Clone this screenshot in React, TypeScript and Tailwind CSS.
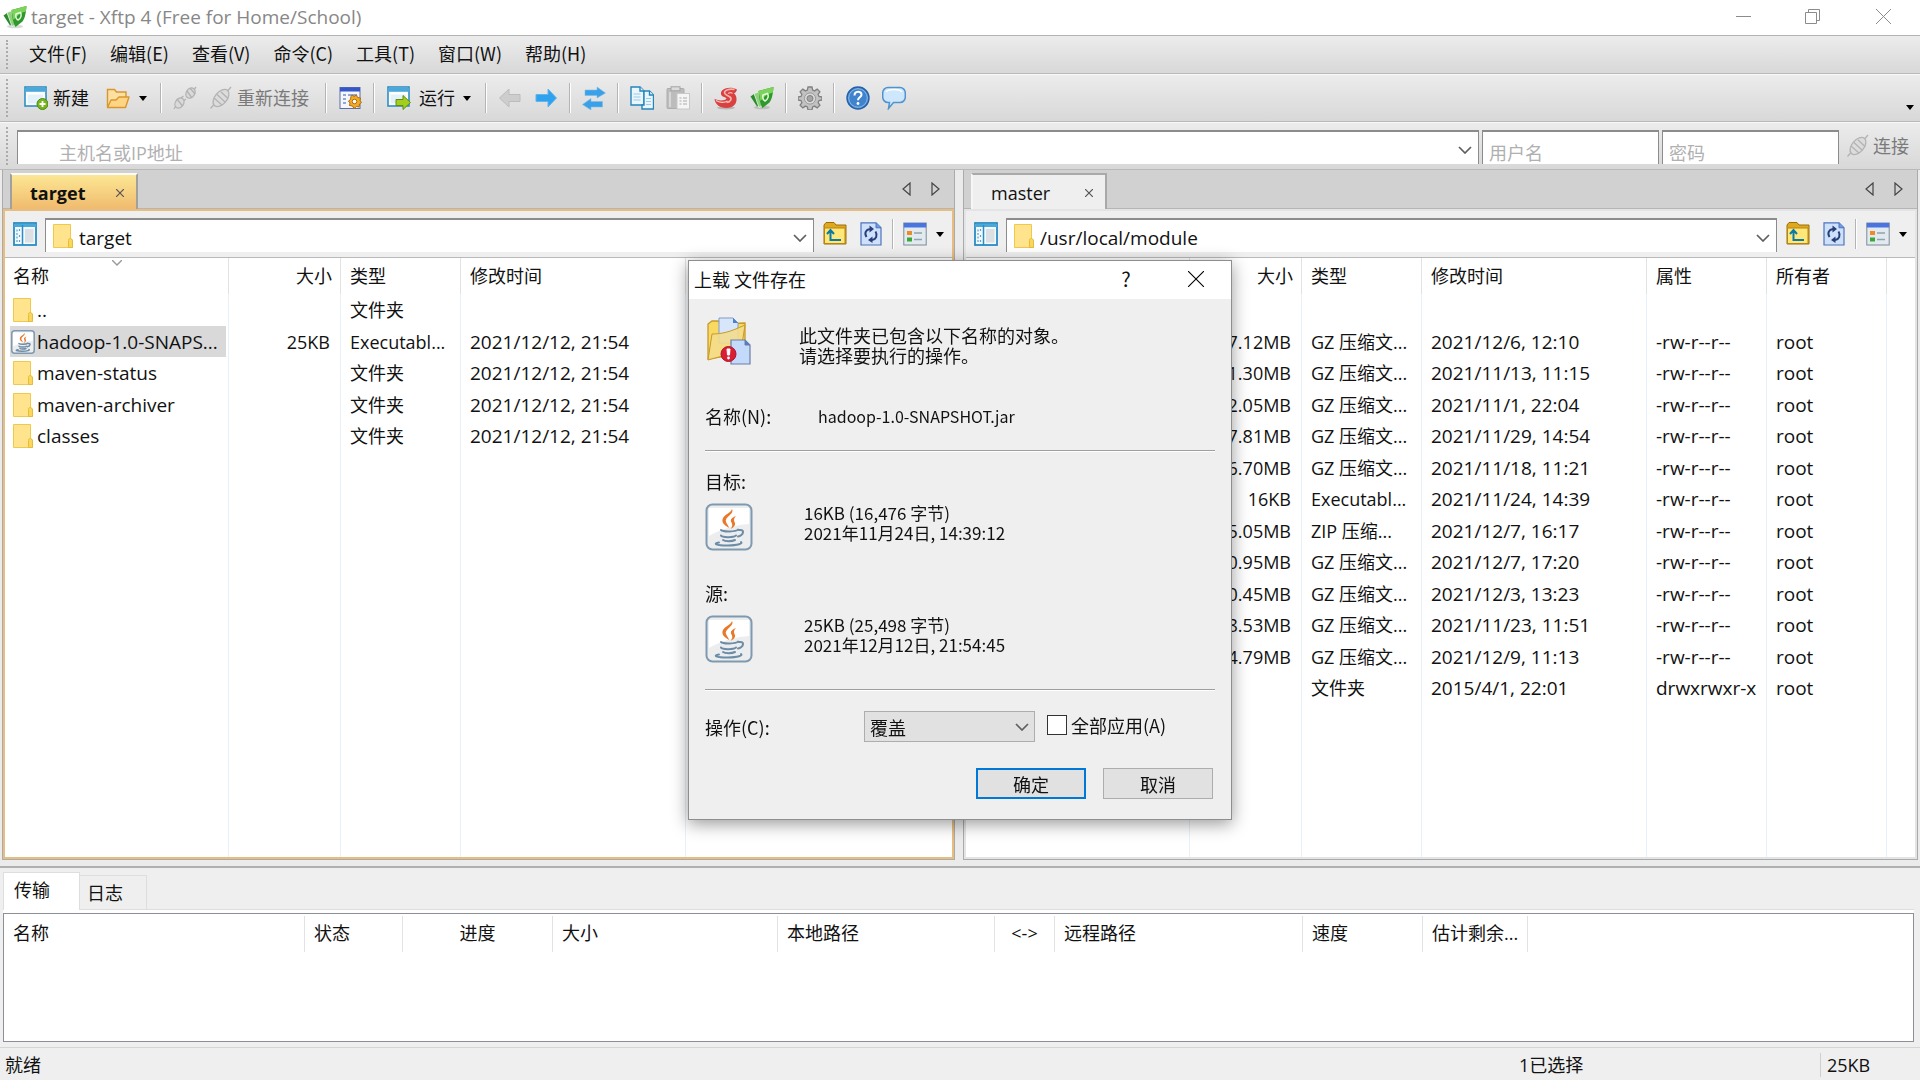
import type { ReactNode } from "react";

interface FileRow {
  name?: string;
  kind?: "folder" | "jar";
  size?: string;
  type?: string;
  modified?: string;
  attrs?: string;
  owner?: string;
  selected?: boolean;
}

interface Column {
  label: string;
  width: string;
  right?: boolean;
}

const LOCAL_COLUMNS: Column[] = [
  { label: "名称", width: "w-[224px]" },
  { label: "大小", width: "w-[112px]", right: true },
  { label: "类型", width: "w-[120px]" },
  { label: "修改时间", width: "w-[225px]" },
  { label: "", width: "" },
];

const REMOTE_COLUMNS: Column[] = [
  { label: "名称", width: "w-[224px]" },
  { label: "大小", width: "w-[112px]", right: true },
  { label: "类型", width: "w-[120px]" },
  { label: "修改时间", width: "w-[225px]" },
  { label: "属性", width: "w-[120px]" },
  { label: "所有者", width: "w-[120px]" },
  { label: "", width: "" },
];

const LOCAL_FILES: FileRow[] = [
  { name: "..", kind: "folder", type: "文件夹" },
  {
    name: "hadoop-1.0-SNAPS...",
    kind: "jar",
    size: "25KB",
    type: "Executabl...",
    modified: "2021/12/12, 21:54",
    selected: true,
  },
  { name: "maven-status", kind: "folder", type: "文件夹", modified: "2021/12/12, 21:54" },
  { name: "maven-archiver", kind: "folder", type: "文件夹", modified: "2021/12/12, 21:54" },
  { name: "classes", kind: "folder", type: "文件夹", modified: "2021/12/12, 21:54" },
];

const GZ = "GZ 压缩文...";
const RW = "-rw-r--r--";

const REMOTE_FILES: FileRow[] = [
  {},
  { size: "7.12MB", type: GZ, modified: "2021/12/6, 12:10", attrs: RW, owner: "root" },
  { size: "1.30MB", type: GZ, modified: "2021/11/13, 11:15", attrs: RW, owner: "root" },
  { size: "2.05MB", type: GZ, modified: "2021/11/1, 22:04", attrs: RW, owner: "root" },
  { size: "7.81MB", type: GZ, modified: "2021/11/29, 14:54", attrs: RW, owner: "root" },
  { size: "6.70MB", type: GZ, modified: "2021/11/18, 11:21", attrs: RW, owner: "root" },
  { size: "16KB", type: "Executabl...", modified: "2021/11/24, 14:39", attrs: RW, owner: "root" },
  { size: "5.05MB", type: "ZIP 压缩...", modified: "2021/12/7, 16:17", attrs: RW, owner: "root" },
  { size: "0.95MB", type: GZ, modified: "2021/12/7, 17:20", attrs: RW, owner: "root" },
  { size: "0.45MB", type: GZ, modified: "2021/12/3, 13:23", attrs: RW, owner: "root" },
  { size: "8.53MB", type: GZ, modified: "2021/11/23, 11:51", attrs: RW, owner: "root" },
  { size: "4.79MB", type: GZ, modified: "2021/12/9, 11:13", attrs: RW, owner: "root" },
  { type: "文件夹", modified: "2015/4/1, 22:01", attrs: "drwxrwxr-x", owner: "root" },
];

const TRANSFER_COLUMNS = [
  { label: "名称", width: "w-[301px]" },
  { label: "状态", width: "w-[98px]" },
  { label: "进度", width: "w-[150px]", center: true },
  { label: "大小", width: "w-[225px]" },
  { label: "本地路径", width: "w-[217px]" },
  { label: "<->", width: "w-[60px]", center: true },
  { label: "远程路径", width: "w-[248px]" },
  { label: "速度", width: "w-[120px]" },
  { label: "估计剩余...", width: "w-[105px]" },
];

const MENUS = ["文件(F)", "编辑(E)", "查看(V)", "命令(C)", "工具(T)", "窗口(W)", "帮助(H)"];

/* ---------- icons ---------- */

function Icon({ children }: { children: ReactNode }) {
  return (
    <svg viewBox="0 0 24 24" className="h-6 w-6 shrink-0" fill="none" aria-hidden="true">
      {children}
    </svg>
  );
}

function XftpIcon() {
  return (
    <Icon>
      <ellipse cx="12" cy="21.500" rx="8" ry="1.800" fill="#000" opacity=".15" />
      <path d="M.5 10.500 4 8l5 11.500-2 1Z" fill="#2c8a2e" />
      <path d="M4 7.500 8.500 6 12 20l-3 1.500Z" fill="#8fd07c" stroke="#eefaea" strokeWidth=".7" />
      <path d="M8.500 5 23.500 1c-.6 6-1 11.500-4 15.500L12.500 22c-2.500-4-3.500-11-4-17Z" fill="#2f9a2b" />
      <path d="M8.500 5 23.500 1l-.6 5.500C18 7.500 14 10.500 10.500 15Z" fill="#7bd35a" />
      <path d="m13 9 4.500-1.500c1.500 2.500.5 6-2.500 7.500-2-1-2.500-3.500-2-6Z" stroke="#e4fadc" strokeWidth="1.500" />
    </Icon>
  );
}

function XshellIcon() {
  return (
    <Icon>
      <ellipse cx="12" cy="21.800" rx="9" ry="1.600" fill="#000" opacity=".18" />
      <path
        d="M23 3.500C18 .5 10.500 1.500 8 4.500c-2 2.700-1 5.500 2 6.500s3 2 1 2.700c-3 1.300-7 .8-10.500-.7C1 18 5.500 22 12.500 22 19 22 23 18 22.500 12.500 22.300 10 21.500 8.500 20 7.500c1.500-.7 2.600-2 3-4Z"
        fill="#d94141"
      />
      <path d="M20.500 3.500C15.500 2.500 10.500 4 10.500 6.500s3.500 3 5.500 4.500 1 5-3.500 5.500" stroke="#f7b3ae" strokeWidth="1.600" />
      <path d="M14 7.500c1.500-1 3.500-1 4.500 0" stroke="#f7b3ae" strokeWidth="1.200" />
      <path d="M2 14.500c3.500 2.300 8.500 2.300 11.500.5" stroke="#f9cbc7" strokeWidth="1.200" />
    </Icon>
  );
}

function NewSessionIcon() {
  return (
    <Icon>
      <rect x="1" y="1" width="21" height="19" fill="#fff" stroke="#2f8fc4" strokeWidth="1.600" />
      <rect x="1.800" y="1.800" width="19.400" height="4" fill="#4aa8da" />
      <path d="M3.500 8.500H19v9H3.500Z" fill="#e3f2fa" />
      <circle cx="18.500" cy="18" r="5.500" fill="#78b41e" stroke="#4e8a10" />
      <path d="M18.500 15v6M15.500 18h6" stroke="#fff" strokeWidth="1.800" />
    </Icon>
  );
}

function RunIcon() {
  return (
    <Icon>
      <rect x="1" y="1" width="21" height="19" fill="#fff" stroke="#2f8fc4" strokeWidth="1.600" />
      <rect x="1.800" y="1.800" width="19.400" height="4" fill="#4aa8da" />
      <path d="M3.500 8.500H19v9H3.500Z" fill="#e3f2fa" />
      <path d="M9 13.500h7V9.500l7.500 7-7.500 7v-4H9Z" fill="#a4ce1e" stroke="#5f8f0c" />
    </Icon>
  );
}

function OpenFolderIcon() {
  return (
    <Icon>
      <path d="M1.500 21V3.500h7l2 2.500H20v5" fill="#fbe0a2" stroke="#d9962c" strokeWidth="1.400" />
      <path d="M1.500 21.500 5 14h5l3-3h10l-3.500 10.500Z" fill="#fdd585" stroke="#d9962c" strokeWidth="1.400" strokeLinejoin="round" />
    </Icon>
  );
}

function DisconnectIcon() {
  return (
    <Icon>
      <g stroke="#b3b3b3" strokeWidth="1.300" fill="#dadada">
        <path d="m1 23 2-3" />
        <ellipse cx="6.500" cy="17" rx="4" ry="5.500" transform="rotate(35 6.500 17)" />
        <path d="m4 13 5.500 7M10.500 15l2.500-2M8 12l2.500-2" />
        <ellipse cx="17.500" cy="7" rx="4.200" ry="5.500" transform="rotate(35 17.500 7)" />
        <path d="m14 5 5 7M17 2l5 6M21.500 3 23 1" />
      </g>
    </Icon>
  );
}

function PlugIcon() {
  return (
    <Icon>
      <g stroke="#b3b3b3" strokeWidth="1.300" fill="#dcdcdc">
        <path d="m1.500 22.500 3.500-4M18.500 5l3.500-4" />
        <ellipse cx="12" cy="12" rx="6" ry="10" transform="rotate(40 12 12)" />
        <path d="m5 12 8 7M8 8.500l8 7.500M12 6l7 6.500" />
      </g>
    </Icon>
  );
}

function PropertiesIcon() {
  return (
    <Icon>
      <rect x="2" y="1.500" width="20" height="21" fill="#f4f6fb" stroke="#5a6fa8" />
      <rect x="2" y="1.500" width="20" height="4" fill="#3456c8" />
      <path d="M5 9h3M5 13h3M5 17h3M10 9h9" stroke="#6f8fc8" strokeWidth="1.500" />
      <path
        d="m14 9 2 1.500L18.500 9l1 2.500 3 .5-.5 2.500 1.500 2-2 1.500-.5 3-2.500-.5-2.500 2-1.500-2.500-3-.5.5-2.500-1.500-2 2-1.500.5-3Z"
        fill="#f3ab26"
        stroke="#b26a08"
      />
      <circle cx="16.500" cy="15.500" r="2.300" fill="#fff" stroke="#b26a08" />
    </Icon>
  );
}

function ArrowIcon({ back }: { back?: boolean }) {
  return back ? (
    <Icon>
      <path d="M1.500 12 11 3v5.500h11v7H11V21Z" fill="#cdcdcd" stroke="#bcbcbc" strokeLinejoin="round" />
    </Icon>
  ) : (
    <Icon>
      <path d="M22.500 12 14 3v5.500H2v7h12V21Z" fill="#2ea2ee" stroke="#68b4e6" strokeLinejoin="round" />
    </Icon>
  );
}

function SwapIcon() {
  return (
    <Icon>
      <path d="M3 4h12V1l8.500 6-8.500 5V9.500H3Z" fill="#3aa0e8" stroke="#7cbce8" strokeWidth=".6" />
      <path d="M20.500 15.500H9v-3L.5 18.500 9 24v-3h11.500Z" fill="#3aa0e8" stroke="#7cbce8" strokeWidth=".6" />
    </Icon>
  );
}

function CopyIcon() {
  return (
    <Icon>
      <g stroke="#2585b8" strokeWidth="1.400" fill="#e9f6fd">
        <path d="M1 1h9l4 4v14H1Z" />
        <path d="M10 1v4h4" />
        <path d="M14 5h5.500L23.500 9v14H12v-4h2Z" />
        <path d="M19.500 5v4h4" />
      </g>
      <path d="M3.500 8h7M3.500 11h7M3.500 14h7M16 12.500h5M16 15.500h5M16 18.500h5" stroke="#9dcbe4" />
    </Icon>
  );
}

function PasteIcon() {
  return (
    <Icon>
      <rect x="1" y="2.500" width="17" height="20" rx="1" fill="#bcbcbc" stroke="#adadad" />
      <rect x="5" y=".8" width="9" height="4" fill="#dcdcdc" stroke="#a3a3a3" />
      <path d="M4 6v15" stroke="#e0e0e0" strokeWidth="1.500" />
      <rect x="11" y="7.500" width="12.500" height="15.500" fill="#f5f5f5" stroke="#c8c8c8" />
      <path d="M13.500 12h2m1.500 0h4M13.500 15h2m1.500 0h4M13.500 18h2m1.500 0h4" stroke="#ababab" strokeWidth="1.200" />
    </Icon>
  );
}

function GearIcon() {
  return (
    <Icon>
      <path
        d="M10 1h4l.6 3 2 .9 2.600-1.800 2.700 2.700L20.100 8.400l.9 2 3 .6v3l-3 .6-.9 2 1.800 2.600-2.700 2.700-2.600-1.800-2 .9-.6 3h-4l-.6-3-2-.9-2.600 1.800-2.700-2.700 1.800-2.600-.9-2L0 14v-3l3-.6.900-2L2.100 5.800l2.700-2.700L7.400 4.900l2-.9Z"
        fill="#c2c2c2"
        stroke="#808080"
        strokeWidth="1.300"
      />
      <circle cx="12" cy="12.500" r="5.600" fill="#d9d9d9" stroke="#9a9a9a" />
      <circle cx="12" cy="12.500" r="3" fill="#a5a5a5" stroke="#808080" />
    </Icon>
  );
}

function HelpIcon() {
  return (
    <Icon>
      <circle cx="12" cy="12" r="11" fill="#3f83cc" stroke="#2561a8" strokeWidth="1.400" />
      <circle cx="12" cy="12" r="9.300" stroke="#8fbdec" />
      <path d="M8.500 9.500c0-5 7-5 7-.8 0 2.500-3.500 2.800-3.500 5.500" stroke="#fff" strokeWidth="2" />
      <circle cx="12" cy="17.500" r="1.400" fill="#fff" />
    </Icon>
  );
}

function ChatIcon() {
  return (
    <Icon>
      <path
        d="M6 1.500h12c3 0 5.300 2.500 5.300 5.500v4c0 3-2.300 5.500-5.300 5.500h-6.500L6.500 22.500l1-6H6C3 16.500.7 14 .7 11V7C.7 4 3 1.500 6 1.500Z"
        fill="#cfe7fd"
        stroke="#4f93cf"
        strokeWidth="1.500"
      />
      <path d="M4 6c1-2 3-2.500 8-2.500s7 .5 8 2.500" stroke="#fff" strokeWidth="1.500" />
    </Icon>
  );
}

function FolderIcon() {
  return (
    <Icon>
      <path d="M2.500.5h17v14l2 1.500v7.500h-19Z" fill="#ffe48d" stroke="#efc94c" />
      <path d="M19.500 14.500c-2 0-2 1-2 2v7h4V16Z" fill="#fbd65f" stroke="#e6bc3c" />
    </Icon>
  );
}

function JavaIcon({ large }: { large?: boolean }) {
  return (
    <svg viewBox="0 0 48 48" className={large ? "h-12 w-12 shrink-0" : "h-6 w-6 shrink-0"} fill="none" aria-hidden="true">
      <rect x="1.500" y="1.500" width="45" height="45" rx="6" fill="#ecedef" stroke="#7f9ab0" strokeWidth={large ? 2 : 3} />
      <path d="M4 5h40v16C30 22 16 26 4 33Z" fill="#fff" />
      <path d="M27 6c3 5-8 8-6 13 .8 2 2.500 3.500 3 6-5-3-8-6-6-10 2-4 8-5 9-9Z" fill="#e8792a" />
      <path d="M31 13c-5 2-6 4-4.500 6.500S27 24 25.500 26c4-2 5.500-4.500 4-7-1-2-.5-4 1.500-6Z" fill="#e8792a" />
      <g stroke="#6d8ca5" strokeWidth={large ? 2 : 3} strokeLinecap="round">
        <path d="M16 27c2 2 15 2 17-.5" />
        <path d="M16 32.500c1 2 12 2.500 15 0" />
        <path d="M18 37c2 1.500 9 1.500 12 0" />
        <path d="M34 27c6-1 5 5-1 6.500" />
        <path d="M14 39.500c-6 1-4 3 9 3 10 0 15-2 13-3.500" />
      </g>
    </svg>
  );
}

function PanelIcon() {
  return (
    <Icon>
      <rect x="1" y="1" width="22" height="22" fill="#f3f9fd" stroke="#2a8cc2" strokeWidth="1.800" />
      <path d="M1 3.500h22" stroke="#4aa8da" strokeWidth="3" />
      <path d="M9.500 3v20" stroke="#2a8cc2" strokeWidth="1.500" />
      <path d="M4 7.500v13M6.500 7v3m0 3v2m0 3v2" stroke="#5aa5cc" strokeWidth="1.200" strokeDasharray="2 1.500" />
      <path d="M12 7h8.500v13.500H12Z" fill="#dcdfe4" />
    </Icon>
  );
}

function FolderUpIcon() {
  return (
    <Icon>
      <path d="M1 22V3l2-2.500h8L13 3h10v19Z" fill="#e0a821" stroke="#9b7009" />
      <path d="M1.500 6H22v15.500H1.500Z" fill="#ffe77a" stroke="#b8860e" />
      <path d="M7.500 8v10H18M4 12l3.500-4 3.500 4" stroke="#0b7aa6" strokeWidth="2" />
    </Icon>
  );
}

function RefreshIcon() {
  return (
    <Icon>
      <path d="M2 .8h15l5 5V23H2Z" fill="#cfe0fa" stroke="#4d74bd" strokeWidth="1.200" />
      <path d="M17 .8v5h5" fill="#6f9be6" stroke="#4d74bd" />
      <path d="M7.500 15c-2.500-4-.5-7.500 3.500-8M16.500 9.500c2.500 4 .5 8-3.500 8.500" stroke="#27407a" strokeWidth="2" />
      <path d="M10.500 3.500 15 7l-4.500 3.500ZM13.500 14.500 9 18l4.500 3Z" fill="#27407a" />
    </Icon>
  );
}

function ViewIcon() {
  return (
    <Icon>
      <rect x=".8" y="1" width="22.400" height="22" fill="#e3eaef" stroke="#7d8b98" />
      <rect x=".8" y="1" width="22.400" height="4.500" fill="#4a75e0" />
      <rect x="4" y="9" width="5" height="4" fill="#f08a24" />
      <rect x="4" y="15.500" width="5" height="4" fill="#38a838" />
      <path d="M11 11h8M11 17.500h8" stroke="#8fa3b0" strokeWidth="1.500" />
    </Icon>
  );
}

function ConflictIcon() {
  return (
    <svg viewBox="0 0 44 48" className="h-12 w-11 shrink-0" fill="none" aria-hidden="true">
      <path d="M1 42V7l4-3h6l3 3 24-1v30Z" fill="#f7d964" stroke="#c79a28" strokeWidth="1.300" />
      <path d="M12 1h14l5 5v20H12Z" fill="#d7e6fb" stroke="#7e9cc9" />
      <path d="M26 1v5h5" fill="#4d7fd0" />
      <path d="M1 43 5 17c10 0 18-2 33-9l-4 26Z" fill="#f5dc8c" fillOpacity=".88" stroke="#c79a28" />
      <path d="M24 23h14l5 5v19H24Z" fill="#c3dafa" stroke="#6d7fa6" strokeWidth="1.200" />
      <path d="M38 23v5h5" fill="#4d7fd0" stroke="#6d7fa6" />
      <circle cx="21.500" cy="37" r="7.500" fill="#d81f35" stroke="#b01228" />
      <path d="M20 32h3l-.5 6h-2Z" fill="#fff" stroke="#fff" />
      <circle cx="21.500" cy="41" r="1.400" fill="#fff" />
    </svg>
  );
}

function Chevron() {
  return (
    <svg viewBox="0 0 14 8" className="h-2 w-3.5" fill="none" stroke="#5f5f5f" strokeWidth="1.700" aria-hidden="true">
      <path d="m1 1 6 6 6-6" />
    </svg>
  );
}

function Caret() {
  return (
    <svg viewBox="0 0 8 5" className="h-[5px] w-2 shrink-0" aria-hidden="true">
      <path d="M0 0h8L4 5Z" fill="#000" />
    </svg>
  );
}

/* ---------- bars ---------- */

function Grip() {
  return <span className="my-1 w-0 shrink-0 self-stretch border-l-2 border-dotted border-[#ababab]" />;
}

function Separator() {
  return (
    <span className="flex w-3 shrink-0 justify-center">
      <span className="h-[30px] w-0.5 border-l border-[#b4b4b4] bg-white" />
    </span>
  );
}

function IconButton({ label, children }: { label: string; children: ReactNode }) {
  return (
    <button type="button" aria-label={label} className="flex h-9 w-9 shrink-0 items-center justify-center">
      {children}
    </button>
  );
}

function TitleBar() {
  return (
    <header className="flex h-9 shrink-0 items-center border-b border-[#b3b3b3] bg-white pb-0.5 pl-[3px] text-[#878787]">
      <XftpIcon />
      <h1 className="ml-1 text-[19px]">target - Xftp 4 (Free for Home/School)</h1>
      <div className="ml-auto flex">
        <button type="button" aria-label="最小化" className="flex h-8 w-[70px] items-center justify-center">
          <span className="h-px w-[15px] bg-[#8b8b8b]" />
        </button>
        <button type="button" aria-label="还原" className="flex h-8 w-[68px] items-center justify-center">
          <svg viewBox="0 0 15 15" className="h-[15px] w-[15px]" fill="none" stroke="#8b8b8b">
            <path d="M.5 3.500h11v11H.5ZM3.500 3V.5h11v11H12" />
          </svg>
        </button>
        <button type="button" aria-label="关闭" className="flex h-8 w-[74px] items-center justify-center">
          <svg viewBox="0 0 15 15" className="h-[15px] w-[15px]" stroke="#8b8b8b">
            <path d="m0 0 15 15M15 0 0 15" />
          </svg>
        </button>
      </div>
    </header>
  );
}

function MenuBar() {
  return (
    <nav className="flex h-[38px] shrink-0 items-center border-b border-[#b9b9b9] bg-linear-to-b from-[#ececec] to-[#d8d8d8] pl-1.5">
      <Grip />
      <div className="ml-[21px] flex gap-[23px] pb-1">
        {MENUS.map((menu) => (
          <button key={menu} type="button" className="whitespace-nowrap font-['Noto_Sans_CJK_SC',sans-serif]">
            {menu}
          </button>
        ))}
      </div>
    </nav>
  );
}

function ToolBar() {
  return (
    <div className="flex h-12 shrink-0 items-center border-t border-b border-t-[#f8f8f8] border-b-[#b9b9b9] bg-linear-to-b from-[#ececec] to-[#d8d8d8] pl-1.5">
      <Grip />
      <button type="button" className="ml-4 flex w-[77px] items-center gap-[5px] whitespace-nowrap">
        <NewSessionIcon />
        新建
      </button>
      <button type="button" aria-label="打开" className="ml-[5px] flex w-[49px] items-center gap-[9px]">
        <OpenFolderIcon />
        <Caret />
      </button>
      <Separator />
      <IconButton label="断开">
        <DisconnectIcon />
      </IconButton>
      <button type="button" disabled className="flex w-[117px] items-center gap-1 whitespace-nowrap pl-1.5 text-[#7a7a7a]">
        <PlugIcon />
        重新连接
      </button>
      <Separator />
      <IconButton label="属性">
        <PropertiesIcon />
      </IconButton>
      <Separator />
      <button type="button" className="flex w-[100px] items-center gap-2 whitespace-nowrap pl-[7px]">
        <RunIcon />
        运行
        <Caret />
      </button>
      <Separator />
      <IconButton label="后退">
        <ArrowIcon back />
      </IconButton>
      <IconButton label="前进">
        <ArrowIcon />
      </IconButton>
      <Separator />
      <IconButton label="同步浏览">
        <SwapIcon />
      </IconButton>
      <Separator />
      <IconButton label="复制">
        <CopyIcon />
      </IconButton>
      <IconButton label="粘贴">
        <PasteIcon />
      </IconButton>
      <Separator />
      <IconButton label="Xshell">
        <XshellIcon />
      </IconButton>
      <IconButton label="Xftp">
        <XftpIcon />
      </IconButton>
      <Separator />
      <IconButton label="选项">
        <GearIcon />
      </IconButton>
      <Separator />
      <IconButton label="帮助">
        <HelpIcon />
      </IconButton>
      <IconButton label="反馈">
        <ChatIcon />
      </IconButton>
      <button type="button" aria-label="更多" className="mr-1.5 ml-auto flex h-9 items-end pb-1.5">
        <Caret />
      </button>
    </div>
  );
}

function AddressBar() {
  const box = "h-[34px] border-x border-t-2 border-[#8c8c8c] bg-white";
  return (
    <form className="flex h-12 shrink-0 items-start border-t border-b border-t-[#f8f8f8] border-b-[#b9b9b9] bg-linear-to-b from-[#ececec] to-[#d8d8d8] pl-1.5">
      <Grip />
      <div className={`mt-[7px] ml-[9px] flex flex-1 items-center pr-[6px] ${box}`}>
        <input
          type="text"
          aria-label="主机名或IP地址"
          placeholder="主机名或IP地址"
          className="h-full flex-1 pt-2.5 pl-[41px] outline-none placeholder:text-[#b0b0b0]"
        />
        <button type="button" aria-label="主机列表" className="pt-1">
          <Chevron />
        </button>
      </div>
      <input
        type="text"
        aria-label="用户名"
        placeholder="用户名"
        className={`mt-[7px] ml-[3px] w-[177px] pt-2.5 pl-1.5 outline-none placeholder:text-[#b0b0b0] ${box}`}
      />
      <input
        type="password"
        aria-label="密码"
        placeholder="密码"
        className={`mt-[7px] ml-[3px] w-[177px] pt-2.5 pl-1.5 outline-none placeholder:text-[#b0b0b0] ${box}`}
      />
      <button type="button" disabled className="flex h-full items-center gap-[3px] pr-[11px] pl-[7px] text-[#7a7a7a]">
        <PlugIcon />
        连接
      </button>
    </form>
  );
}

/* ---------- file panes ---------- */

function NameCell({ row }: { row: FileRow }) {
  if (!row.name) return null;
  return (
    <span className={`flex h-[31px] items-center gap-0.5 pl-px ${row.selected ? "bg-[#d9d9d9]" : ""}`}>
      {row.kind === "jar" ? <JavaIcon /> : <FolderIcon />}
      {row.name}
    </span>
  );
}

function FileTable({ columns, files, label }: { columns: Column[]; files: FileRow[]; label: string }) {
  const line = "border-r border-[#e6f1fb] last:border-r-0";
  const hasOwner = columns.length > 5;
  return (
    <table aria-label={label} className="h-full w-full table-fixed border-separate border-spacing-0 whitespace-nowrap">
      <thead>
        <tr className="h-9">
          {columns.map((col, i) => (
            <th
              key={i}
              className={`relative border-r border-[#e2e2e2] p-0 font-normal last:border-r-0 ${col.width} ${
                col.right ? "pr-2 text-right" : i === 0 ? "pl-2 text-left" : "pl-[9px] text-left"
              }`}
            >
              {col.label}
              {i === 0 && (
                <svg
                  viewBox="0 0 10 6"
                  className="absolute top-0.5 left-1/2 h-1.5 w-2.5 -translate-x-1/2"
                  fill="none"
                  stroke="#9a9a9a"
                  strokeWidth="1.400"
                  aria-hidden="true"
                >
                  <path d="m0 0 5 5 5-5" />
                </svg>
              )}
            </th>
          ))}
        </tr>
      </thead>
      <tbody>
        {files.map((row, i) => (
          <tr key={i} className="h-[31px] odd:h-8">
            <td className={`p-0 pr-0.5 pl-[5px] text-[19px] ${line}`}>
              <NameCell row={row} />
            </td>
            <td className={`p-0 pr-[10px] text-right ${line}`}>{row.size}</td>
            <td className={`p-0 pl-[9px] ${line}`}>{row.type}</td>
            <td className={`p-0 pl-[9px] text-[19px] ${line}`}>{row.modified}</td>
            {hasOwner && <td className={`p-0 pl-[9px] text-[19px] ${line}`}>{row.attrs}</td>}
            {hasOwner && <td className={`p-0 pl-[9px] text-[19px] ${line}`}>{row.owner}</td>}
            <td />
          </tr>
        ))}
        {/* filler row carries the column lines to the bottom */}
        <tr>
          {columns.map((_, i) => (
            <td key={i} className={`p-0 ${line}`} />
          ))}
        </tr>
      </tbody>
    </table>
  );
}

interface FilePaneProps {
  tab: string;
  path: string;
  active?: boolean;
  columns: Column[];
  files: FileRow[];
}

function FilePane({ tab, path, active, columns, files }: FilePaneProps) {
  return (
    <section className="flex min-w-0 flex-col border-x border-b border-[#ababab]">
      <div className="flex h-[39px] shrink-0 items-end border-b border-[#b5b5b5] bg-[#d1d1d1] pl-[7px]">
        <div
          className={`-mb-px flex h-9 items-center border-2 border-b-0 pt-px ${
            active
              ? "w-[128px] border-t-[#fbfbfb] border-r-[#a0a0a0] border-l-[#a0a0a0] bg-linear-to-b from-[#fbe794] to-[#f0bb6e] pl-[18px] font-bold"
              : "w-[136px] border-t-[#a9a9a9] border-r-[#a9a9a9] border-l-[#f6f6f6] bg-[#efefef] pl-[18px]"
          }`}
        >
          <button type="button">{tab}</button>
          <button type="button" aria-label={`关闭 ${tab}`} className="mr-3 ml-auto">
            <svg viewBox="0 0 8 8" className="h-2 w-2" stroke="#555" strokeWidth="1.200">
              <path d="m0 0 8 8M8 0 0 8" />
            </svg>
          </button>
        </div>
        <div className="mr-3.5 ml-auto flex gap-5 self-center">
          <button type="button" aria-label="上一个标签">
            <svg viewBox="0 0 9 14" className="h-3.5 w-[9px]" fill="none" stroke="#444" strokeWidth="1.200">
              <path d="M8 1v12L1 7Z" />
            </svg>
          </button>
          <button type="button" aria-label="下一个标签">
            <svg viewBox="0 0 9 14" className="h-3.5 w-[9px]" fill="none" stroke="#444" strokeWidth="1.200">
              <path d="M1 1v12l7-6Z" />
            </svg>
          </button>
        </div>
      </div>
      <div className={`flex min-h-0 flex-1 flex-col border-2 ${active ? "border-[#e8bd80]" : "border-[#e4e4e6]"}`}>
        <div className="flex h-[47px] shrink-0 items-center border-b border-[#b9b9b9] bg-[#efefef] pl-2">
          <button type="button" aria-label="显示文件夹树">
            <PanelIcon />
          </button>
          <div className="mt-[2px] ml-2 flex h-[34px] flex-1 items-center border-x border-t-2 border-[#8c8c8c] bg-white pr-1.5 pl-[5px]">
            <FolderIcon />
            <input
              type="text"
              aria-label="路径"
              defaultValue={path}
              className="ml-1 min-w-0 flex-1 pt-1 text-[19px] outline-none"
            />
            <button type="button" aria-label="路径列表" className="pt-1">
              <Chevron />
            </button>
          </div>
          <button type="button" aria-label="上一级" className="ml-[9px]">
            <FolderUpIcon />
          </button>
          <button type="button" aria-label="刷新" className="mr-1 ml-3">
            <RefreshIcon />
          </button>
          <Separator />
          <button type="button" aria-label="视图" className="mr-2 ml-1 flex items-center gap-[9px]">
            <ViewIcon />
            <Caret />
          </button>
        </div>
        <div className="min-h-0 flex-1 bg-white">
          <FileTable columns={columns} files={files} label={path} />
        </div>
      </div>
    </section>
  );
}

/* ---------- transfer list ---------- */

function TransferPanel() {
  return (
    <section className="shrink-0 border-t-2 border-[#b0b0b0] bg-[#efefef] px-[3px] pt-1 pr-[6px] pb-[5px]">
      <div role="tablist" className="flex h-[38px] items-start border-b border-[#dedede]">
        <button
          type="button"
          role="tab"
          aria-selected="true"
          className="h-[38px] w-[77px] border border-b-0 border-[#dedede] bg-white pb-1 pl-2.5 text-left"
        >
          传输
        </button>
        <button
          type="button"
          role="tab"
          aria-selected="false"
          className="mt-[3px] h-[34px] w-[67px] border border-l-0 border-b-0 border-[#dedede] pl-[7px] text-left"
        >
          日志
        </button>
      </div>
      <div className="h-[3px] bg-white" />
      <div className="h-[129px] border border-[#8c8f96] bg-white pt-0.5">
        <table aria-label="传输" className="table-fixed border-separate border-spacing-0 whitespace-nowrap">
          <thead>
            <tr className="h-9">
              {TRANSFER_COLUMNS.map((col) => (
                <th
                  key={col.label}
                  className={`border-r border-[#e2e2e2] p-0 pb-0.5 font-normal ${col.width} ${
                    col.center ? "text-center" : "pl-[9px] text-left"
                  }`}
                >
                  {col.label}
                </th>
              ))}
            </tr>
          </thead>
        </table>
      </div>
    </section>
  );
}

function StatusBar() {
  return (
    <footer className="flex h-[33px] shrink-0 items-center border-t border-[#d5d5d5] bg-[#efefef] pt-0.5 pl-[5px]">
      <span>就绪</span>
      <span className="ml-auto w-[301px]">1已选择</span>
      <span className="w-[100px] border-l border-[#cfcfcf] pl-1.5">25KB</span>
    </footer>
  );
}

/* ---------- dialog ---------- */

function FileInfo({ title, size, date }: { title: string; size: string; date: string }) {
  return (
    <div>
      <h3 className="leading-5">{title}</h3>
      <div className="mt-3 flex">
        <JavaIcon large />
        <p className="ml-[51px] text-[17px] leading-5">
          {size}
          <br />
          {date}
        </p>
      </div>
    </div>
  );
}

function OverwriteDialog() {
  return (
    <div className="fixed inset-0 flex items-center justify-center">
      <div
        role="dialog"
        aria-labelledby="dialog-title"
        className="w-[544px] border border-[#8e8e8e] bg-[#efefef] font-['Noto_Sans_CJK_SC',sans-serif] shadow-[0_4px_16px_rgba(0,0,0,0.4)]"
      >
        <div className="flex h-[38px] items-center bg-white pb-0.5 pl-[5px]">
          <h2 id="dialog-title">上载 文件存在</h2>
          <button type="button" aria-label="帮助" className="ml-auto w-[70px] text-xl">
            ?
          </button>
          <button type="button" aria-label="关闭" className="flex w-[70px] justify-center">
            <svg viewBox="0 0 16 16" className="h-4 w-4" stroke="#000" strokeWidth="1.100">
              <path d="m0 0 16 16M16 0 0 16" />
            </svg>
          </button>
        </div>
        <div className="px-4 pt-[18px] pb-5">
          <div className="flex">
            <div className="pl-0.5">
              <ConflictIcon />
            </div>
            <p className="mt-2 ml-12 leading-5">
              此文件夹已包含以下名称的对象。
              <br />
              请选择要执行的操作。
            </p>
          </div>
          <div className="mt-[41px] flex items-center leading-5">
            <span className="w-[113px]">名称(N):</span>
            <span className="text-base leading-5">hadoop-1.0-SNAPSHOT.jar</span>
          </div>
          <hr className="mt-6 h-0.5 border-t border-[#9f9f9f] bg-white" />
          <div className="mt-[19px]">
            <FileInfo title="目标:" size="16KB (16,476 字节)" date="2021年11月24日, 14:39:12" />
          </div>
          <div className="mt-8">
            <FileInfo title="源:" size="25KB (25,498 字节)" date="2021年12月12日, 21:54:45" />
          </div>
          <hr className="mt-[26px] h-0.5 border-t border-[#9f9f9f] bg-white" />
          <div className="mt-5 flex items-center">
            <label htmlFor="action" className="w-[159px]">
              操作(C):
            </label>
            <div className="relative">
              <select
                id="action"
                className="h-[31px] w-[171px] appearance-none border border-[#adadad] bg-[#e1e1e1] pl-[5px] leading-6"
              >
                <option>覆盖</option>
              </select>
              <span className="pointer-events-none absolute top-3 right-1.5">
                <Chevron />
              </span>
            </div>
            <label className="ml-3 flex items-center gap-1 pb-1">
              <input type="checkbox" className="h-5 w-5 appearance-none border border-[#333] bg-white" />
              全部应用(A)
            </label>
          </div>
          <div className="mt-[26px] flex justify-end gap-[17px] pr-0.5">
            <button type="button" className="h-[31px] w-[110px] border-2 border-[#0078d7] bg-[#e1e1e1] leading-5">
              确定
            </button>
            <button type="button" className="h-[31px] w-[110px] border border-[#adadad] bg-[#e1e1e1] leading-5">
              取消
            </button>
          </div>
        </div>
      </div>
    </div>
  );
}

export default function App() {
  return (
    <div className="flex h-screen flex-col overflow-hidden bg-[#ebebeb] font-['Open_Sans','Noto_Sans_CJK_SC',sans-serif] text-lg leading-6 text-[#111]">
      <TitleBar />
      <MenuBar />
      <ToolBar />
      <AddressBar />
      <main className="mb-1.5 grid min-h-0 flex-1 grid-cols-[953fr_955fr] gap-2 px-0.5">
        <FilePane tab="target" path="target" active columns={LOCAL_COLUMNS} files={LOCAL_FILES} />
        <FilePane tab="master" path="/usr/local/module" columns={REMOTE_COLUMNS} files={REMOTE_FILES} />
      </main>
      <TransferPanel />
      <StatusBar />
      <OverwriteDialog />
    </div>
  );
}
